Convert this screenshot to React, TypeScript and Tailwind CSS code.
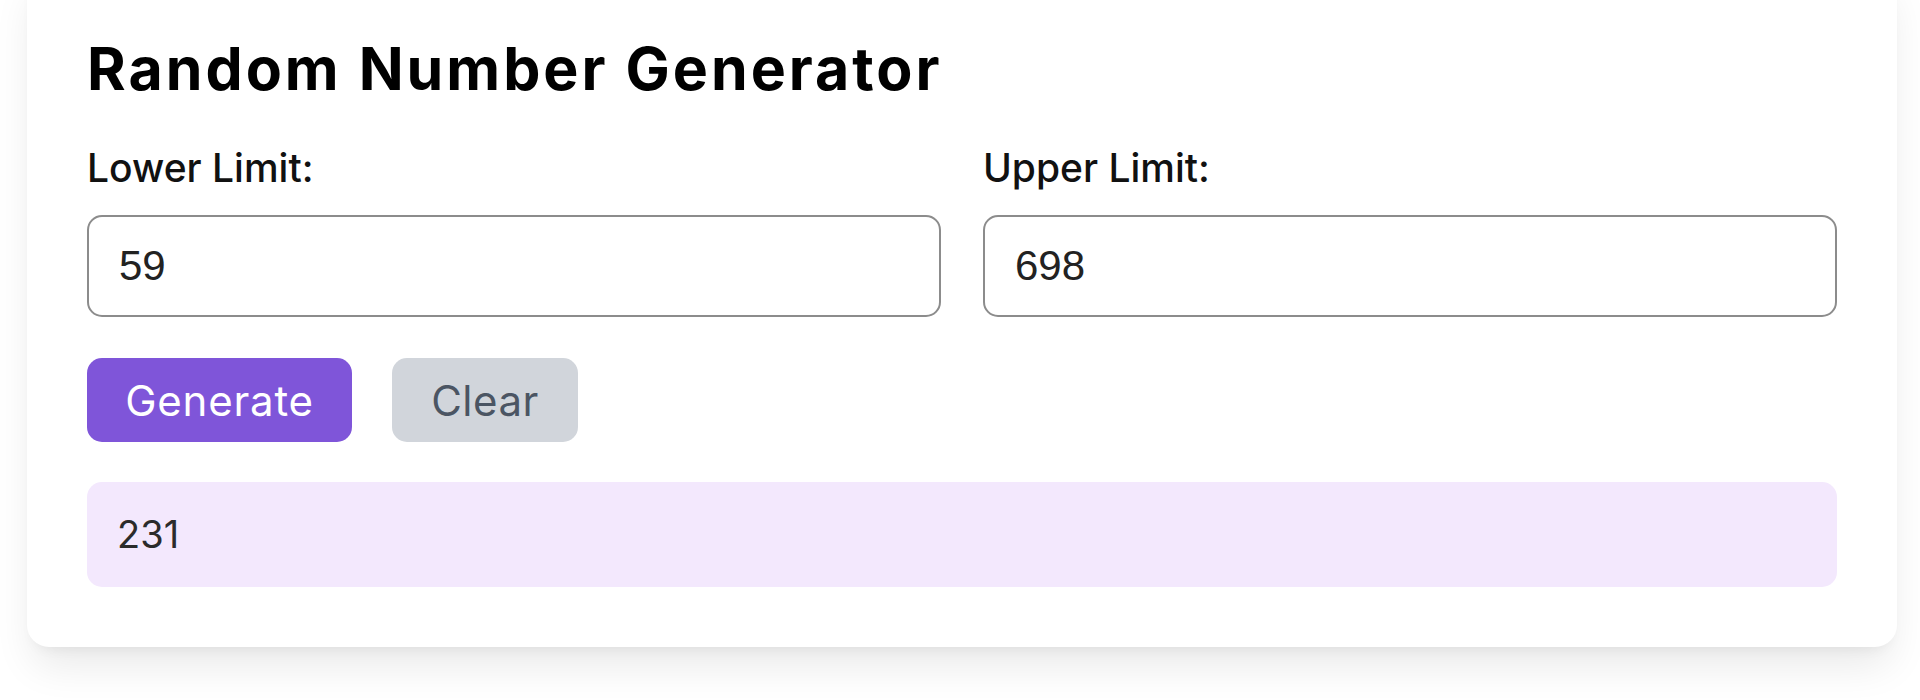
import { useState } from "react"

const POPPINS = "font-['Inter','Noto_Sans',sans-serif]"

export default function App() {
  const [lower, setLower] = useState("59")
  const [upper, setUpper] = useState("698")
  const [result, setResult] = useState<number | null>(231)

  const generate = () => {
    const lo = Number(lower)
    const hi = Number(upper)
    if (Number.isNaN(lo) || Number.isNaN(hi) || hi < lo) return
    setResult(Math.floor(Math.random() * (hi - lo + 1)) + lo)
  }

  const clear = () => {
    setLower("")
    setUpper("")
    setResult(null)
  }

  return (
    <div className={`flex min-h-[700px] flex-col bg-white ${POPPINS}`}>
      <div className="ml-[27px] mr-[23px] -mt-[31px] rounded-b-[22px] bg-white px-[60px] pt-[60px] pb-[60px] shadow-[0_24px_40px_-6px_rgba(0,0,0,0.09),0_8px_14px_-8px_rgba(0,0,0,0.08)]">
        <h1 className="text-[59px] leading-[80px] font-bold tracking-[3px] text-black">
          Random Number Generator
        </h1>

        <div className="mt-[29px] grid grid-cols-2 gap-[42px]">
          <div>
            <label className="block text-[39px] leading-[60px] font-medium text-[#111]">Lower Limit:</label>
            <input
              type="number"
              value={lower}
              onChange={(e) => setLower(e.target.value)}
              className="mt-[17px] block h-[102px] w-full rounded-[15px] border-[2.5px] border-[#8c8c8c] bg-white px-[30px] font-['Liberation_Sans',Arial,sans-serif] text-[42px] text-[#222] outline-none [appearance:textfield] [&::-webkit-inner-spin-button]:appearance-none"
            />
          </div>
          <div>
            <label className="block text-[39px] leading-[60px] font-medium text-[#111]">Upper Limit:</label>
            <input
              type="number"
              value={upper}
              onChange={(e) => setUpper(e.target.value)}
              className="mt-[17px] block h-[102px] w-full rounded-[15px] border-[2.5px] border-[#8c8c8c] bg-white px-[30px] font-['Liberation_Sans',Arial,sans-serif] text-[42px] text-[#222] outline-none [appearance:textfield] [&::-webkit-inner-spin-button]:appearance-none"
            />
          </div>
        </div>

        <div className="mt-[41px] flex gap-[40px]">
          <button
            onClick={generate}
            className="h-[84px] w-[265px] rounded-[15px] bg-[#7f55d9] text-[42px] tracking-[0.8px] text-white"
          >
            Generate
          </button>
          <button
            onClick={clear}
            className="h-[84px] w-[186px] rounded-[15px] bg-[#d1d5db] text-[42px] tracking-[0.5px] text-[#4b5563]"
          >
            Clear
          </button>
        </div>

        <div className="mt-[40px] flex h-[105px] items-center rounded-[15px] bg-[#f3e8fd] px-[30px] text-[38px] text-[#2b2b2b]">
          {result ?? ""}
        </div>
      </div>
    </div>
  )
}
